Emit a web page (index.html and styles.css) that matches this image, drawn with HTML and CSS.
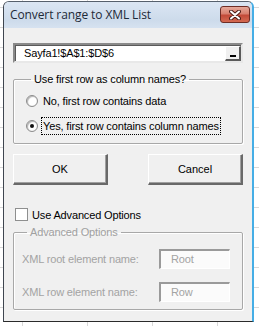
FILE: index.html
```html
<!DOCTYPE html>
<html lang="en">

<head>
    <meta charset="UTF-8">
    <title>Convert range to XML List</title>
    <link rel="stylesheet" href="styles.css">
</head>

<body>

    <div class="window">
        <div class="titlebar">
            <span class="title">Convert range to XML List</span>
            <button class="btn-close">
                <svg width="12" height="10" viewBox="0 0 12 10">
                    <path d="M2 1.5 L10 8.5 M10 1.5 L2 8.5" stroke="#4a1c16" stroke-width="4" stroke-linecap="round"/>
                    <path d="M2 1.5 L10 8.5 M10 1.5 L2 8.5" stroke="#ffffff" stroke-width="2" stroke-linecap="round"/>
                </svg>
            </button>
        </div>

        <div class="client">
            <div class="range-field">
                <span class="range-text">Sayfa1!$A$1:$D$6</span>
                <span class="range-btn"><span class="range-bar"></span></span>
            </div>

            <fieldset class="group group-first">
                <legend>Use first row as column names?</legend>
                <label class="option">
                    <span class="radio"></span>
                    <span class="option-text">No, first row contains data</span>
                </label>
                <label class="option">
                    <span class="radio checked"></span>
                    <span class="option-text focused">Yes, first row contains column names</span>
                </label>
            </fieldset>

            <div class="buttons">
                <button class="button">OK</button>
                <button class="button">Cancel</button>
            </div>

            <label class="check-row">
                <span class="checkbox"></span>
                <span>Use Advanced Options</span>
            </label>

            <fieldset class="group group-adv">
                <legend>Advanced Options</legend>
                <div class="field-row">
                    <span class="field-label">XML root element name:</span>
                    <span class="field-input">Root</span>
                </div>
                <div class="field-row">
                    <span class="field-label">XML row element name:</span>
                    <span class="field-input">Row</span>
                </div>
            </fieldset>
        </div>
    </div>

</body>

</html>
```

FILE: styles.css
```css
body {
    margin: 0;
    width: 259px;
    height: 326px;
    overflow: hidden;
    font-family: "Liberation Sans", Arial, sans-serif;
    font-size: 11px;
    letter-spacing: -0.15px;
    color: #000;
    background-color: #ffffff;
    background-image:
        linear-gradient(90deg, transparent 64px, #d8d8d8 64px, #d8d8d8 65px, transparent 65px),
        linear-gradient(180deg, transparent 19px, #d8d8d8 19px, #d8d8d8 20px, transparent 20px);
    background-size: 65px 100%, 100% 20px;
    background-position: 23px 0, 0 8px;
}

.window {
    margin: 1px 0 0 3px;
    width: 248px;
    height: 319px;
    border-top: 1px solid #56606c;
    border-left: 1px solid #3f4650;
    border-bottom: 1px solid #2a2a2a;
    border-right: 2px solid #45aee6;
    border-radius: 6px 6px 0 0;
    background: #f0f0f0;
    display: flex;
    flex-direction: column;
}

.titlebar {
    height: 26px;
    display: flex;
    align-items: flex-start;
    background: linear-gradient(180deg, #dbe6f3, #cddbeb 70%, #d6e2f0);
    border-radius: 5px 5px 0 0;
}

.title {
    margin: 5px 0 0 6px;
    font-family: "Open Sans", "Noto Sans", sans-serif;
    font-size: 12px;
    line-height: 16px;
    letter-spacing: -0.1px;
    color: #1e2a38;
}

.btn-close {
    margin: 4px 2px 0 auto;
    width: 30px;
    height: 17px;
    padding: 0;
    border: 1px solid #6e2d25;
    border-radius: 3px;
    background: linear-gradient(180deg, #e6a99a, #d8806f 45%, #c24a38 55%, #d46a52);
    display: flex;
    align-items: center;
    justify-content: center;
}

.client {
    padding: 0 9px;
    display: flex;
    flex-direction: column;
}

.range-field {
    margin-top: 15px;
    height: 16px;
    display: flex;
    align-items: center;
    background: #fff;
    border-top: 2px solid #8a8a8a;
    border-left: 2px solid #8a8a8a;
    border-bottom: 2px solid #e8e8e8;
    border-right: 2px solid #e8e8e8;
    box-shadow: inset 1px 1px 0 #5a5a5a;
}

.range-text {
    margin-left: 9px;
}

.range-btn {
    margin-left: auto;
    width: 13px;
    height: 12px;
    background: #f0f0f0;
    border-top: 1px solid #fff;
    border-left: 1px solid #fff;
    border-bottom: 2px solid #5a5a5a;
    border-right: 2px solid #5a5a5a;
    display: flex;
    align-items: flex-end;
    justify-content: center;
}

.range-bar {
    width: 6px;
    height: 2px;
    margin-bottom: 2px;
    background: #000;
}

.group {
    margin: 0;
    border: 1px solid #a8a8a8;
    border-radius: 2px;
    box-shadow: inset 1px 1px 0 #fff, 1px 1px 0 #fff;
    min-width: 0;
}

.group legend {
    padding: 0 3px;
    margin-left: 5px;
    line-height: 13px;
}

.group-first {
    margin-top: 10px;
    padding: 5px 8px 8px 12px;
    display: flex;
    flex-direction: column;
    gap: 6px;
}

.option {
    height: 19px;
    display: flex;
    align-items: center;
}

.radio {
    width: 10px;
    height: 10px;
    border-radius: 50%;
    border: 1px solid #8c8c8c;
    background: radial-gradient(circle, #fff 55%, #dcdcdc);
    box-shadow: inset 1px 1px 1px #b5b5b5;
    display: flex;
    align-items: center;
    justify-content: center;
}

.radio.checked::after {
    content: "";
    width: 4px;
    height: 4px;
    border-radius: 50%;
    background: #111;
}

.option-text {
    margin-left: 3px;
    padding: 2px 1px;
    border: 1px dotted transparent;
}

.option-text.focused {
    border-color: #000;
}

.buttons {
    margin-top: 10px;
    display: flex;
    justify-content: space-between;
}

.button {
    width: 95px;
    height: 31px;
    padding: 0;
    font-family: "Liberation Sans", Arial, sans-serif;
    font-size: 11px;
    color: #000;
    background: #f0f0f0;
    border-top: 1px solid #fff;
    border-left: 1px solid #fff;
    border-bottom: 2px solid #696969;
    border-right: 2px solid #696969;
    box-shadow: inset -1px -1px 0 #a0a0a0;
}

.check-row {
    margin-top: 22px;
    margin-left: 2px;
    height: 15px;
    display: flex;
    align-items: center;
    gap: 4px;
}

.checkbox {
    width: 11px;
    height: 11px;
    background: #fff;
    border: 1px solid #8e8f8f;
}

.group-adv {
    margin-top: 4px;
    padding: 10px 12px 7px 8px;
    display: flex;
    flex-direction: column;
    gap: 13px;
}

.group-adv legend {
    color: #a0a0a0;
}

.field-row {
    display: flex;
    align-items: center;
    justify-content: space-between;
}

.field-label {
    color: #a3a3a3;
}

.field-input {
    width: 58px;
    height: 17px;
    line-height: 17px;
    padding-left: 10px;
    color: #a3a3a3;
    background: #fbfbfb;
    border-top: 2px solid #9a9a9a;
    border-left: 2px solid #9a9a9a;
    border-bottom: 1px solid #fff;
    border-right: 1px solid #fff;
}
```
